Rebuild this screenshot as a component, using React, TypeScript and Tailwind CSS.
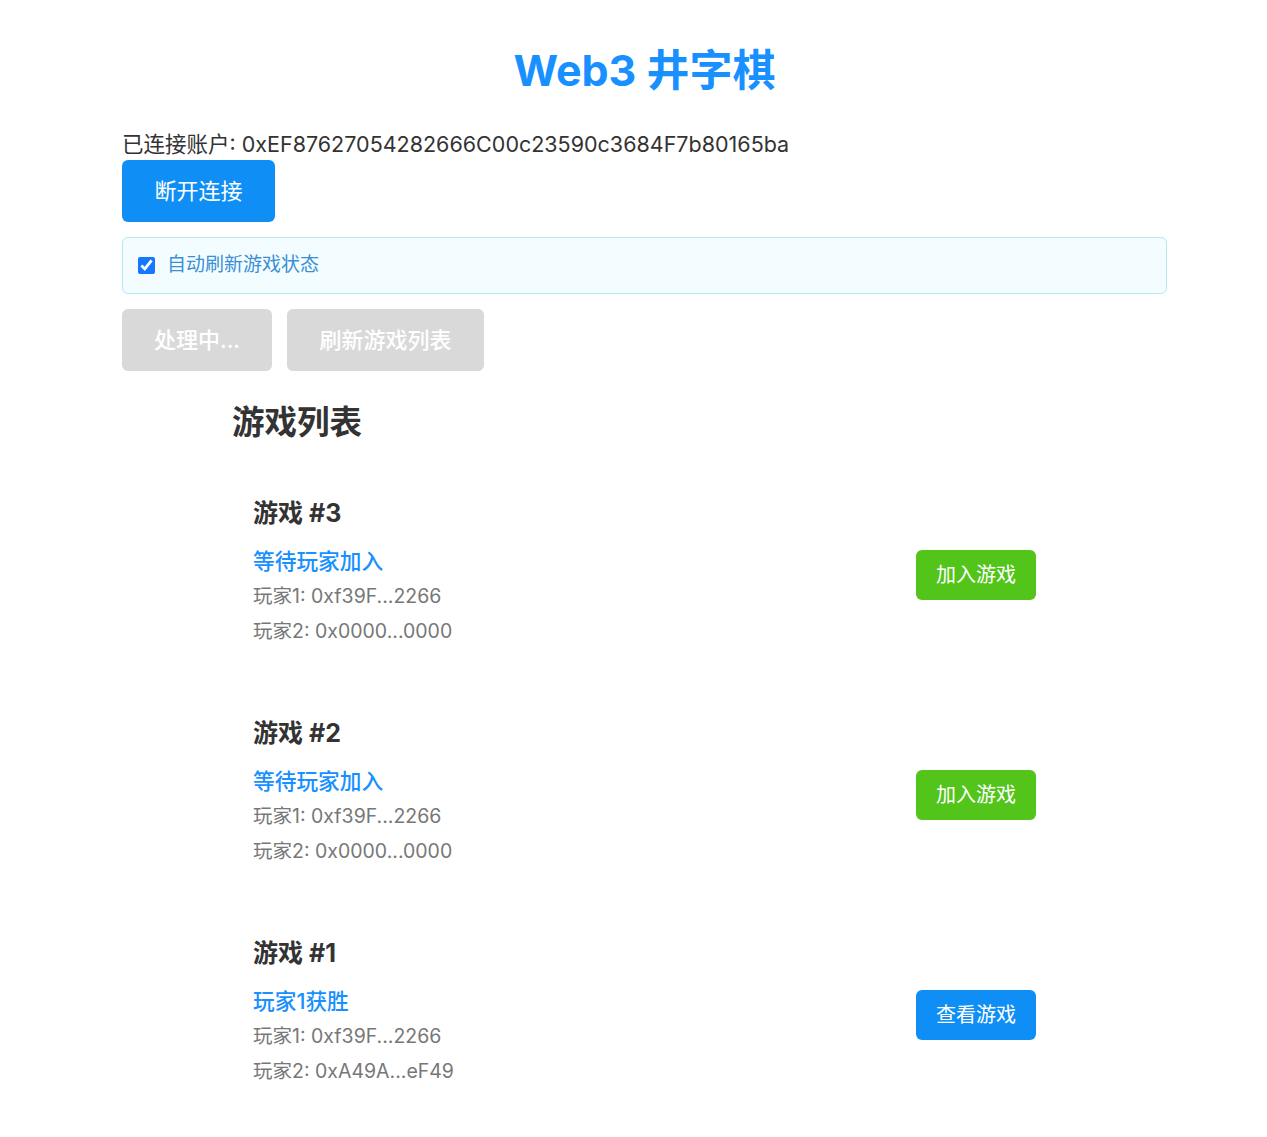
import React, { useState } from 'react';

type Game = {
  id: number;
  status: string;
  player1: string;
  player2: string;
  action: 'join' | 'view';
};

const games: Game[] = [
  { id: 3, status: '等待玩家加入', player1: '0xf39F...2266', player2: '0x0000...0000', action: 'join' },
  { id: 2, status: '等待玩家加入', player1: '0xf39F...2266', player2: '0x0000...0000', action: 'join' },
  { id: 1, status: '玩家1获胜', player1: '0xf39F...2266', player2: '0xA49A...eF49', action: 'view' },
];

const font = { fontFamily: 'Inter, "Noto Sans CJK SC", sans-serif' };

export default function App() {
  const [autoRefresh, setAutoRefresh] = useState(true);

  return (
    <div className="min-h-screen bg-white" style={font}>
      <div className="ml-[122px] w-[1045px] pt-[44px] pb-10">
        <h1 className="text-center text-[43px] leading-[52px] font-bold text-[#1890ff]">Web3 井字棋</h1>

        <p className="mt-[33px] text-[21.5px] leading-[30px] text-[#333]">
          已连接账户: 0xEF87627054282666C00c23590c3684F7b80165ba
        </p>
        <button className="mt-px h-[62px] w-[153px] rounded-md bg-[#0f8ff5] text-[22px] text-white">
          断开连接
        </button>

        <div className="mt-[15px] flex h-[57px] items-center rounded-md border border-[#b5e8f0] bg-[#f3fdff] px-[15px]">
          <label className="flex items-center gap-3 text-[19px] text-[#3a8fd6]">
            <input
              type="checkbox"
              checked={autoRefresh}
              onChange={() => setAutoRefresh(!autoRefresh)}
              className="h-[17px] w-[17px] accent-[#1677ff]"
            />
            自动刷新游戏状态
          </label>
        </div>

        <div className="mt-[15px] flex gap-[15px]">
          <button disabled className="h-[62px] w-[150px] rounded-md bg-[#d9d9d9] text-[22px] font-medium text-white">
            处理中...
          </button>
          <button disabled className="h-[62px] w-[197px] rounded-md bg-[#d9d9d9] text-[22px] font-medium text-white">
            刷新游戏列表
          </button>
        </div>

        <div className="mx-auto mt-[32px] w-[825px]">
          <h2 className="text-[32.5px] leading-[40px] font-bold text-[#333]">游戏列表</h2>
          <div className="mt-[19px]">
            {games.map((game) => (
              <div key={game.id} className="flex items-center justify-between px-[21px] py-[33px]">
                <div>
                  <h3 className="text-[25px] leading-[36px] font-bold text-[#333]">游戏 #{game.id}</h3>
                  <p className="mt-[14px] text-[21.7px] leading-[32px] font-medium text-[#1890ff]">{game.status}</p>
                  <p className="mt-[2px] text-[19.5px] leading-[35px] text-[#777]">玩家1: {game.player1}</p>
                  <p className="text-[19.5px] leading-[35px] text-[#777]">玩家2: {game.player2}</p>
                </div>
                <button
                  className={
                    game.action === 'join'
                      ? 'mt-[5px] h-[50px] w-[120px] rounded-md bg-[#52c41a] text-[20px] text-white'
                      : 'mt-[5px] h-[50px] w-[120px] rounded-md bg-[#0f8ff5] text-[20px] text-white'
                  }
                >
                  {game.action === 'join' ? '加入游戏' : '查看游戏'}
                </button>
              </div>
            ))}
          </div>
        </div>
      </div>
    </div>
  );
}
